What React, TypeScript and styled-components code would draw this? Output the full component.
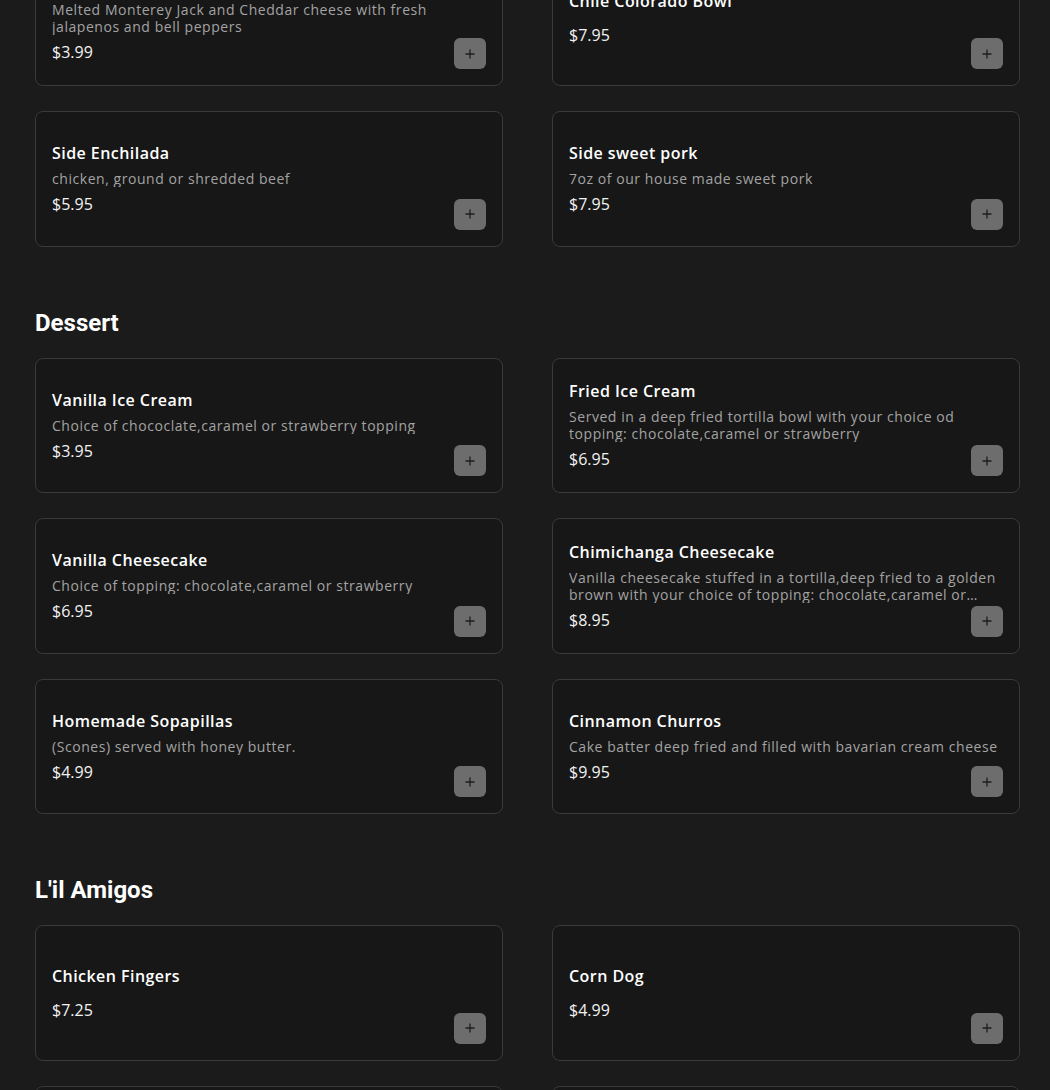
import React from 'react';
import styled, { createGlobalStyle } from 'styled-components';

type Item = { name: string; desc?: string; price: string };
type Section = { title?: string; items: Item[] };

const sections: Section[] = [
    {
        items: [
            { name: 'Jalapeño Cheese Dip', desc: 'Melted Monterey Jack and Cheddar cheese with fresh jalapenos and bell peppers', price: '$3.99' },
            { name: 'Chile Colorado Bowl', price: '$7.95' },
            { name: 'Side Enchilada', desc: 'chicken, ground or shredded beef', price: '$5.95' },
            { name: 'Side sweet pork', desc: '7oz of our house made sweet pork', price: '$7.95' },
        ],
    },
    {
        title: 'Dessert',
        items: [
            { name: 'Vanilla Ice Cream', desc: 'Choice of chococlate,caramel or strawberry topping', price: '$3.95' },
            { name: 'Fried Ice Cream', desc: 'Served in a deep fried tortilla bowl with your choice od topping: chocolate,caramel or strawberry', price: '$6.95' },
            { name: 'Vanilla Cheesecake', desc: 'Choice of topping: chocolate,caramel or strawberry', price: '$6.95' },
            { name: 'Chimichanga Cheesecake', desc: 'Vanilla cheesecake stuffed in a tortilla,deep fried to a golden brown with your choice of topping: chocolate,caramel or strawberry', price: '$8.95' },
            { name: 'Homemade Sopapillas', desc: '(Scones) served with honey butter.', price: '$4.99' },
            { name: 'Cinnamon Churros', desc: 'Cake batter deep fried and filled with bavarian cream cheese', price: '$9.95' },
        ],
    },
    {
        title: "L'il Amigos",
        items: [
            { name: 'Chicken Fingers', price: '$7.25' },
            { name: 'Corn Dog', price: '$4.99' },
            { name: 'Quesadilla', desc: 'Cheese quesadilla', price: '$5.99' },
            { name: 'Mini Burrito', desc: 'Bean and cheese', price: '$5.99' },
        ],
    },
];

const PlusIcon = () => (
    <svg width="10" height="10" viewBox="0 0 10 10">
        <path d="M5 0.5v9M0.5 5h9" stroke="#1e1e1e" strokeWidth="1.3" />
    </svg>
);

const App = () => {
    return (
        <>
            <GlobalStyle />
            <Page>
                {sections.map((section, i) => (
                    <SectionBlock key={i}>
                        {section.title && <SectionTitle>{section.title}</SectionTitle>}
                        <Grid>
                            {section.items.map(item => (
                                <Card key={item.name}>
                                    <Info>
                                        <Name>{item.name}</Name>
                                        <Desc>{item.desc}</Desc>
                                        <Price>{item.price}</Price>
                                    </Info>
                                    <AddBtn aria-label="add"><PlusIcon /></AddBtn>
                                </Card>
                            ))}
                        </Grid>
                    </SectionBlock>
                ))}
            </Page>
        </>
    );
};

export default App;

const GlobalStyle = createGlobalStyle`
    body {
        margin: 0;
        background: #1b1b1b;
        font-family: "Open Sans", "Noto Sans", sans-serif;
    }
`

const Page = styled.div`
    padding: 0 30px 40px 35px;
    margin-top: -49.5px;
`

const SectionBlock = styled.section`
    & + & {
        margin-top: 62px;
    }
`

const SectionTitle = styled.h2`
    margin: 0 0 21px;
    font-family: Roboto, "Liberation Sans", sans-serif;
    font-weight: 700;
    font-size: 24px;
    line-height: 28px;
    color: #ffffff;
`

const Grid = styled.div`
    display: grid;
    grid-template-columns: 468px 468px;
    column-gap: 49px;
    row-gap: 25px;
`

const Card = styled.div`
    height: 135.5px;
    box-sizing: border-box;
    background-color: #171717;
    border: 1px solid #3a3a3a;
    border-radius: 8px;
    padding: 16px;
    display: grid;
    grid-template-columns: 1fr;
    grid-template-rows: 1fr;
`

const Info = styled.div`
    grid-area: 1 / 1;
    align-self: center;
    min-width: 0;
    display: flex;
    flex-direction: column;
    gap: 5px;
`

const Name = styled.div`
    font-size: 16px;
    font-weight: 600;
    line-height: 24px;
    letter-spacing: 0.45px;
    color: #ffffff;
`

const Desc = styled.div`
    font-size: 14px;
    line-height: 17px;
    letter-spacing: 0.55px;
    color: #a3a3a3;
    display: -webkit-box;
    -webkit-line-clamp: 2;
    -webkit-box-orient: vertical;
    overflow: hidden;
`

const Price = styled.div`
    font-size: 16px;
    line-height: 24px;
    color: #f2f2f2;
`

const AddBtn = styled.button`
    grid-area: 1 / 1;
    align-self: end;
    justify-self: end;
    width: 32px;
    height: 31px;
    border: none;
    border-radius: 6px;
    background-color: #6d6d6d;
    display: flex;
    align-items: center;
    justify-content: center;
    padding: 0;
    cursor: pointer;
`
